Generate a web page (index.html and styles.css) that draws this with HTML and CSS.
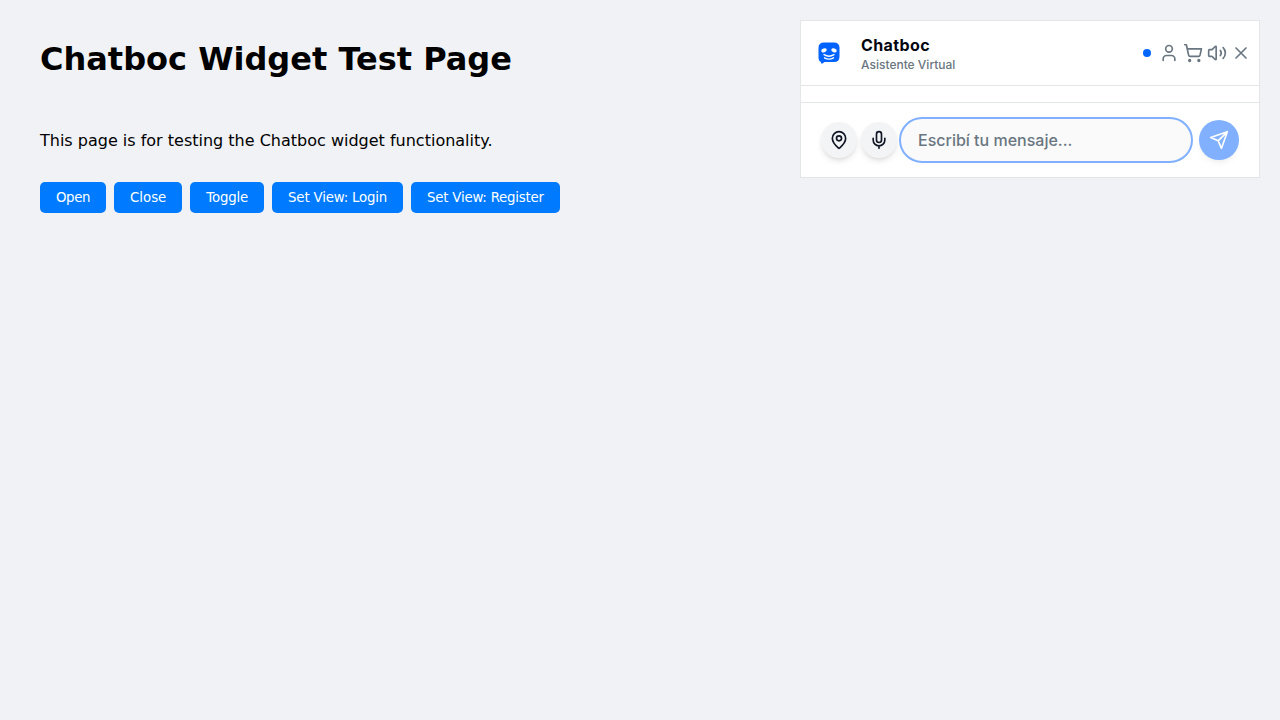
FILE: index.html
```html
<!DOCTYPE html>
<html lang="es">
<head>
<meta charset="utf-8">
<title>Chatboc Widget Test Page</title>
<link rel="stylesheet" href="styles.css">
</head>
<body>
<main class="page">
  <h1 class="title">Chatboc Widget Test Page</h1>
  <p class="intro">This page is for testing the Chatboc widget functionality.</p>
  <div class="controls">
    <button class="control tight">Open</button>
    <button class="control loose">Close</button>
    <button class="control">Toggle</button>
    <button class="control">Set View: Login</button>
    <button class="control snug">Set View: Register</button>
  </div>
</main>
<aside class="widget">
  <header class="head">
    <svg class="logo" viewBox="0 0 24 24">
      <path fill="#0062ff" d="M7 1.500h10q5.500 0 5.500 5.500v8.500q0 5.500-5.500 5.500H7.500l-2.500 1.800q-1 0-1.200-1.700Q1.500 20 1.500 16V7Q1.500 1.500 7 1.500z"/>
      <g fill="#fff"><ellipse cx="7" cy="9.400" rx="2.800" ry="1.900" transform="rotate(-18 7 9.400)"/><ellipse cx="17" cy="9.400" rx="2.800" ry="1.900" transform="rotate(18 17 9.400)"/></g>
      <path d="M7 13.700q5 3.200 10 0M7.500 16.800q4.500 2.600 9 0" fill="none" stroke="#fff" stroke-width="1.400" stroke-linecap="round"/>
    </svg>
    <div class="names"><span class="name">Chatboc</span><span class="role">Asistente Virtual</span></div>
    <div class="tools">
      <span class="status"></span>
      <svg class="icon" viewBox="0 0 24 24"><path d="M19 21v-2a4 4 0 0 0-4-4H9a4 4 0 0 0-4 4v2"/><circle cx="12" cy="7" r="4"/></svg>
      <svg class="icon" viewBox="0 0 24 24"><circle cx="8" cy="21" r="1"/><circle cx="19" cy="21" r="1"/><path d="M2.050 2.050h2l2.660 12.420a2 2 0 0 0 2 1.580h9.780a2 2 0 0 0 1.950-1.570l1.650-7.430H5.120"/></svg>
      <svg class="icon" viewBox="0 0 24 24"><path d="M11 4.702a.705.705 0 0 0-1.203-.498L6.413 7.587A1.400 1.400 0 0 1 5.416 8H3a1 1 0 0 0-1 1v6a1 1 0 0 0 1 1h2.416a1.400 1.400 0 0 1 .997.413l3.383 3.384A.705.705 0 0 0 11 19.298z"/><path d="M16 9a5 5 0 0 1 0 6"/><path d="M19.364 18.364a9 9 0 0 0 0-12.728"/></svg>
      <svg class="icon" viewBox="0 0 24 24"><path d="M18 6 6 18M6 6l12 12"/></svg>
    </div>
  </header>
  <div class="messages"></div>
  <footer class="composer">
    <button class="round"><svg class="icon" viewBox="0 0 24 24"><path d="M20 10c0 4.993-5.539 10.193-7.399 11.799a1 1 0 0 1-1.202 0C9.539 20.193 4 14.993 4 10a8 8 0 0 1 16 0"/><circle cx="12" cy="10" r="3"/></svg></button>
    <button class="round"><svg class="icon" viewBox="0 0 24 24"><path d="M12 2a3 3 0 0 0-3 3v7a3 3 0 0 0 6 0V5a3 3 0 0 0-3-3z"/><path d="M19 10v2a7 7 0 0 1-14 0v-2M12 19v3"/></svg></button>
    <input class="field" type="text" placeholder="Escribí tu mensaje...">
    <button class="send"><svg class="icon" viewBox="0 0 24 24"><path d="m22 2-7 20-4-9-9-4zM22 2 11 13"/></svg></button>
  </footer>
</aside>
</body>
</html>
```
FILE: styles.css
```css
* { box-sizing: border-box; }
body {
  margin: 0;
  min-height: 720px;
  padding: 20px 20px 20px 40px;
  display: flex;
  justify-content: space-between;
  align-items: flex-start;
  background: #f0f2f5;
  font-family: "DejaVu Sans", sans-serif;
  color: #000;
}
.page { padding-top: 21px; }
.title { margin: 0; font-size: 32px; line-height: 37px; font-weight: 700; }
.intro { margin: 53px 0 32px; font-size: 16px; line-height: 19px; }
.controls { display: flex; gap: 8px; }
.control {
  height: 31px;
  padding: 0 16px;
  border: 0;
  border-radius: 5px;
  background: #007bff;
  color: #fff;
  font: 13.333px "DejaVu Sans", sans-serif;
  letter-spacing: -0.18px;
}
.tight { letter-spacing: -0.4px; }
.loose { letter-spacing: 0; }
.snug { letter-spacing: -0.22px; }
.widget {
  width: 460px;
  border: 1px solid #e3e5e9;
  background: #fff;
  font-family: Inter, sans-serif;
}
.head {
  display: flex;
  align-items: center;
  height: 65px;
  padding: 0 8px 0 16px;
  border-bottom: 1px solid #e3e5e9;
}
.logo { width: 24px; height: 24px; margin-right: 20px; }
.names { display: flex; flex-direction: column; padding-top: 3px; }
.name { font-size: 16px; line-height: 20px; font-weight: 700; color: #020610; letter-spacing: 0.4px; }
.role { font-size: 12px; line-height: 19px; font-weight: 500; color: #697681; }
.tools { display: flex; align-items: center; gap: 4px; margin-left: auto; color: #697681; }
.status { width: 8px; height: 8px; margin-right: 4px; border-radius: 50%; background: #0066ff; }
.icon {
  display: block;
  width: 20px;
  height: 20px;
  fill: none;
  stroke: currentColor;
  stroke-width: 2;
  stroke-linecap: round;
  stroke-linejoin: round;
}
.messages { height: 17px; border-bottom: 1px solid #e3e5e9; }
.composer { display: flex; align-items: center; height: 74px; padding: 0 20px; }
.round, .send {
  display: flex;
  align-items: center;
  justify-content: center;
  flex: none;
  padding: 0;
  border: 0;
  border-radius: 50%;
}
.round {
  width: 36px;
  height: 36px;
  margin-right: 4px;
  background: #f2f4f6;
  color: #101624;
  box-shadow: 0 4px 6px -1px rgba(0,0,0,.1), 0 2px 4px -2px rgba(0,0,0,.1);
}
.round + .field { margin-left: -2px; }
.field {
  flex: 1;
  min-width: 0;
  height: 46px;
  margin-right: 6px;
  padding: 0 17px;
  border: 2px solid #80b0ff;
  border-radius: 23px;
  background: #fafafa;
  font: 500 16px Inter, sans-serif;
}
.field::placeholder { color: #697681; opacity: 1; }
.send {
  width: 40px;
  height: 40px;
  background: #80b0ff;
  color: #fff;
  box-shadow: 0 4px 6px -1px rgba(0,0,0,.05), 0 2px 4px -2px rgba(0,0,0,.05);
}
```
